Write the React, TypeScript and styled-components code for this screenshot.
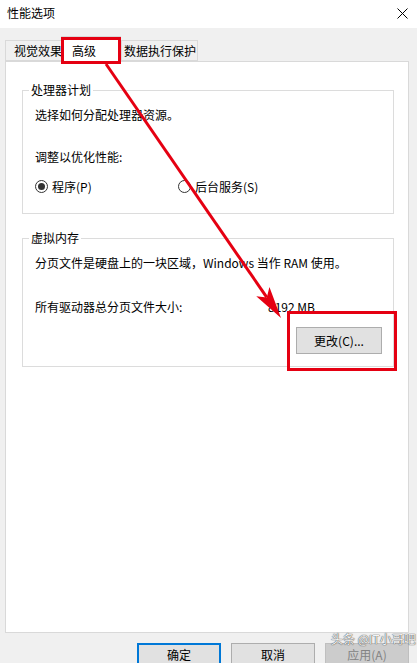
import React from "react";
import styled, { createGlobalStyle } from "styled-components";

const GlobalStyle = createGlobalStyle`
  html, body {
    margin: 0;
    padding: 0;
    background: #f0f0f0;
  }
  body {
    font-family: "Noto Sans CJK SC", "Microsoft YaHei", sans-serif;
    font-size: 12px;
    color: #000;
  }
`;

const Window = styled.div`
  position: relative;
  width: 417px;
  height: 663px;
  overflow: hidden;
  background: #f0f0f0;
`;

const TitleBar = styled.div`
  height: 28px;
  background: #fff;
  display: flex;
  align-items: center;
  justify-content: space-between;
  padding: 0 9px 2px 7px;
  box-sizing: border-box;
  line-height: 14px;
`;

const Body = styled.div`
  padding: 8px 8px 0 5px;
`;

const TabStrip = styled.div`
  display: flex;
  align-items: flex-end;
  height: 25px;
  position: relative;
  z-index: 1;
`;

const Tab = styled.div<{ $w: number; $pl: number; $active?: boolean }>`
  box-sizing: border-box;
  width: ${(p) => p.$w}px;
  padding-left: ${(p) => p.$pl}px;
  height: ${(p) => (p.$active ? 26 : 21)}px;
  margin-bottom: ${(p) => (p.$active ? -1 : 0)}px;
  margin-left: ${(p) => (p.$active ? -2 : 0)}px;
  background: ${(p) => (p.$active ? "#fff" : "#f0f0f0")};
  border: 1px solid #d9d9d9;
  border-bottom: ${(p) => (p.$active ? "none" : "1px solid #d9d9d9")};
  display: flex;
  align-items: center;
  line-height: 14px;
  padding-top: ${(p) => (p.$active ? 2 : 0)}px;
  white-space: nowrap;
`;

const Panel = styled.div`
  box-sizing: border-box;
  height: 572px;
  background: #fff;
  border: 1px solid #d9d9d9;
  padding: 21px 14px 0 16px;
`;

const Group = styled.fieldset<{ $gap?: number }>`
  margin: ${(p) => p.$gap ?? 0}px 0 0 0;
  padding: 0 11px 0 12px;
  border: 1px solid #dcdcdc;
  min-width: 0;
`;

const Legend = styled.legend`
  margin-left: -6px;
  padding: 0 2px;
  line-height: 14px;
`;

const Line = styled.div<{ $mt: number }>`
  margin-top: ${(p) => p.$mt}px;
  line-height: 18px;
  white-space: nowrap;
`;

const RadioRow = styled.div`
  display: flex;
  align-items: center;
  margin-top: 11px;
  height: 18px;
  padding-bottom: 18px;
`;

const RadioLabel = styled.label<{ $w?: number }>`
  display: flex;
  align-items: center;
  gap: 4px;
  width: ${(p) => (p.$w ? `${p.$w}px` : "auto")};
`;

const RadioDot = styled.span<{ $checked?: boolean }>`
  box-sizing: border-box;
  width: 13px;
  height: 13px;
  border-radius: 50%;
  border: 1px solid #333;
  display: flex;
  align-items: center;
  justify-content: center;
  &::after {
    content: "";
    width: 7px;
    height: 7px;
    border-radius: 50%;
    background: ${(p) => (p.$checked ? "#333" : "transparent")};
  }
`;

const SizeRow = styled.div`
  display: grid;
  grid-template-columns: 233px auto;
  margin-top: 26px;
  line-height: 18px;
`;

const ButtonRow = styled.div<{ $pad: string; $gap?: number }>`
  display: flex;
  justify-content: flex-end;
  gap: ${(p) => p.$gap ?? 0}px;
  padding: ${(p) => p.$pad};
`;

const Button = styled.button<{ $w: number; $h: number; $variant?: "default" | "disabled" }>`
  box-sizing: border-box;
  width: ${(p) => p.$w}px;
  height: ${(p) => p.$h}px;
  font: inherit;
  color: ${(p) => (p.$variant === "disabled" ? "#838383" : "#000")};
  background: ${(p) => (p.$variant === "disabled" ? "#cccccc" : "#e1e1e1")};
  border: ${(p) =>
    p.$variant === "default"
      ? "2px solid #0078d7"
      : p.$variant === "disabled"
      ? "1px solid #bfbfbf"
      : "1px solid #adadad"};
  padding: 0;
  line-height: 14px;
`;

const Watermark = styled.div`
  position: absolute;
  left: 331px;
  top: 631px;
  z-index: 3;
  font-size: 12px;
  line-height: 15px;
  white-space: nowrap;
  color: #f4f4f4;
  text-shadow: 0 0 1px #444, 0 0 1px #444;
  pointer-events: none;
`;

const Markup = styled.svg`
  position: absolute;
  left: 0;
  top: 0;
  z-index: 2;
  pointer-events: none;
`;

const CloseIcon = () => (
  <svg width="11" height="11" viewBox="0 0 11 11">
    <path d="M0.5 0.5 L10.5 10.5 M10.5 0.5 L0.5 10.5" stroke="#000" strokeWidth="1" fill="none" />
  </svg>
);

// red callouts: the tab frame, the button frame and the arrow linking them
const Callouts = () => {
  const x1 = 106;
  const y1 = 64;
  const tx = 281;
  const ty = 318;
  const dx = tx - x1;
  const dy = ty - y1;
  const len = Math.hypot(dx, dy);
  const ux = dx / len;
  const uy = dy / len;
  const headLen = 32;
  const half = 8;
  const bx = tx - ux * headLen;
  const by = ty - uy * headLen;
  const nx = -uy;
  const ny = ux;
  const notchX = tx - ux * (headLen - 7);
  const notchY = ty - uy * (headLen - 7);
  const head = [
    `${tx},${ty}`,
    `${bx + nx * half},${by + ny * half}`,
    `${notchX},${notchY}`,
    `${bx - nx * half},${by - ny * half}`,
  ].join(" ");
  return (
    <Markup width={417} height={663}>
      <rect x={62.5} y={38.5} width={57} height={24} fill="none" stroke="#e50012" strokeWidth={3} />
      <rect x={288.5} y={312.5} width={107} height={57} fill="none" stroke="#e50012" strokeWidth={3} />
      <line x1={x1} y1={y1} x2={notchX} y2={notchY} stroke="#e50012" strokeWidth={3} />
      <polygon points={head} fill="#e50012" />
    </Markup>
  );
};

const App: React.FC = () => {
  return (
    <Window>
      <GlobalStyle />
      <TitleBar>
        <span>性能选项</span>
        <CloseIcon />
      </TitleBar>
      <Body>
        <TabStrip>
          <Tab $w={58} $pl={8}>视觉效果</Tab>
          <Tab $w={60} $pl={10} $active>高级</Tab>
          <Tab $w={77} $pl={2}>数据执行保护</Tab>
        </TabStrip>
        <Panel>
          <Group>
            <Legend>处理器计划</Legend>
            <Line $mt={9}>选择如何分配处理器资源。</Line>
            <Line $mt={24}>调整以优化性能:</Line>
            <RadioRow>
              <RadioLabel $w={143}>
                <RadioDot $checked />
                程序(P)
              </RadioLabel>
              <RadioLabel>
                <RadioDot />
                后台服务(S)
              </RadioLabel>
            </RadioRow>
          </Group>
          <Group $gap={17}>
            <Legend>虚拟内存</Legend>
            <Line $mt={9}>分页文件是硬盘上的一块区域，Windows 当作 RAM 使用。</Line>
            <SizeRow>
              <span>所有驱动器总分页文件大小:</span>
              <span>8192 MB</span>
            </SizeRow>
            <ButtonRow $pad="11px 0 12px 0">
              <Button $w={86} $h={27}>更改(C)...</Button>
            </ButtonRow>
          </Group>
        </Panel>
        <ButtonRow $pad="10px 0 0 0" $gap={10}>
          <Button $w={84} $h={24} $variant="default">确定</Button>
          <Button $w={84} $h={24}>取消</Button>
          <Button $w={84} $h={24} $variant="disabled">应用(A)</Button>
        </ButtonRow>
      </Body>
      <Watermark>头条 @IT小哥吧</Watermark>
      <Callouts />
    </Window>
  );
};

export default App;
